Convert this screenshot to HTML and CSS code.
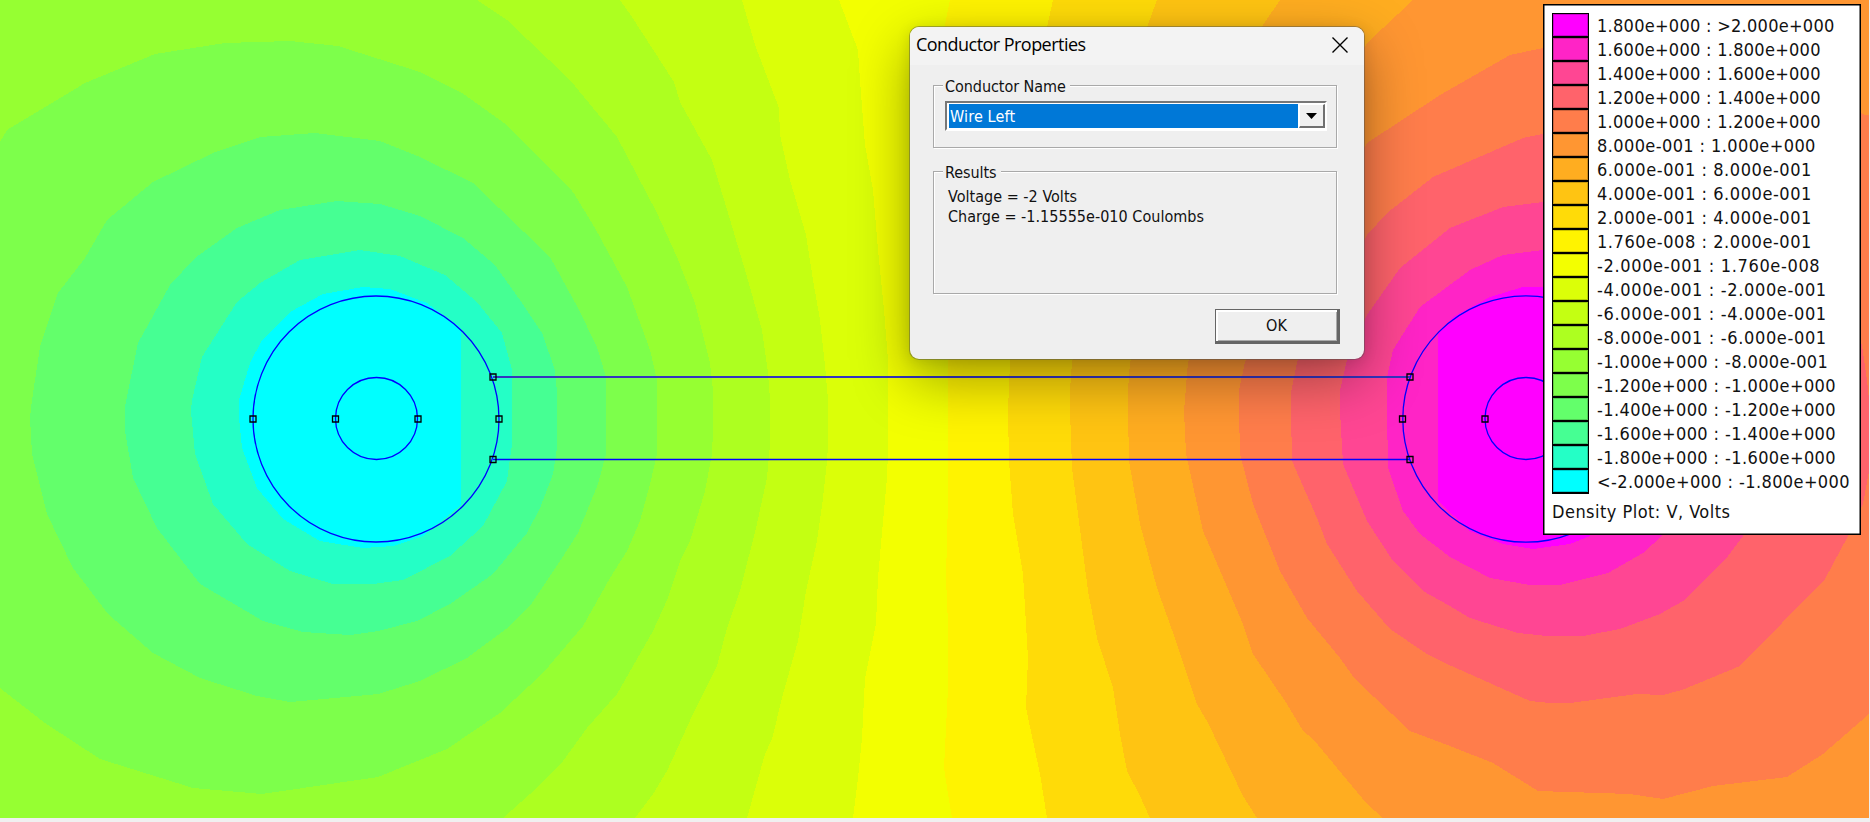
FILE: index.html
```html
<!DOCTYPE html>
<html lang="en">
<head>
<meta charset="utf-8">
<title>Conductor Properties</title>
<link rel="stylesheet" href="styles.css">
</head>
<body>
<main class="viewport">
  <svg class="plot" width="1869" height="818" viewBox="0 0 1869 818" aria-label="Density plot">
    <rect class="c10" width="1869" height="818"/>
    <!-- negative potentials, outermost band first -->
    <path class="c11" d="M0 0H839L858 50 860 80 865 145 873 190 878 250 884 310 888 360V450L887 478 883 521 878 578 876 624 865 678 862 738 858 778 853 818H0Z"/>
    <path class="c12" d="M0 0H742L755 45 779 108 780 135 790 180 806 235 813 280 820 320 825 365 828 400V445L827 461 823 498 817 541 806 591 798 641 783 694 772 739 765 754 747 818H0Z"/>
    <path class="c13" d="M0 0H620L632 17 674 82 680 102 712 160 728 213 745 270 762 330 768 373 770 400V444L767 478 756 528 740 591 727 628 717 666 693 714 667 771 653 794 635 818H0Z"/>
    <path class="c14" d="M0 0H477L507 20 570 80 617 137 657 213 677 257 695 303 710 363 713 390V430L712 454 705 491 690 541 680 561 668 598 653 631 633 666 617 694 587 728 563 761 530 794 503 818H0Z"/>
    <path class="c15" d="M0 142L7 130 85 83 155 54 225 43 290 41 338 46 420 72 462 93 507 125 573 192 595 228 627 287 650 350 657 380V454L650 484 640 521 627 551 610 578 583 626 543 673 500 713 447 749 378 777 262 794 193 788 100 759 45 723 0 688Z"/>
    <path class="c16" d="M315 133L380 141 420 157 473 183 550 257 578 308 597 347 606 377V454L598 484 578 533 560 561 532 603 510 626 467 658 420 681 378 694 290 702 257 696 200 678 153 653 108 614 73 568 47 514 32 454 30 418 32 400 40 347 58 293 85 258 107 220 153 182 213 153 260 137Z"/>
    <path class="c17" d="M337 201L380 204 420 216 463 238 495 265 522 303 542 333 555 370 557 393V448L553 474 540 508 527 533 493 574 450 604 417 621 378 631 350 635 303 632 263 621 200 584 157 528 133 478 125 431V406L138 343 170 285 195 258 237 228 280 210Z"/>
    <path class="c18" d="M360 250L400 256 445 275 477 302 502 333 512 370V444L507 481 483 526 450 556 403 580 373 584H333L290 571 247 544 213 504 195 454 191 411 192 400 202 357 237 302 260 283 300 260Z"/>
    <path class="c19" d="M239 400L250 363 262 340 290 312 323 294 363 287 390 289 427 303 461 328V505L423 536 393 546 363 548 320 541 283 519 257 488 242 448 239 418Z"/>
    <!-- positive potentials, outermost band first -->
    <path class="c9" d="M950 0L945 25 948 362V500L946 578 948 624V688L944 768 948 794 952 818H1869V0Z"/>
    <path class="c8" d="M1053 0L1047 27 1010 362 1008 411 1009 461 1013 514 1023 574 1028 658 1026 708 1040 774 1047 818H1869V0Z"/>
    <path class="c7" d="M1157 0L1147 27 1072 362 1070 390V411L1072 468 1088 591 1097 638 1113 688 1120 734 1127 771 1140 796 1150 818H1869V0Z"/>
    <path class="c6" d="M1280 0L1263 25 1130 362 1128 390V411L1129 461 1140 524 1157 588 1177 644 1197 704 1208 723 1243 796 1257 818H1869V0Z"/>
    <path class="c5" d="M1413 0L1367 43 1188 362 1184 411 1186 454 1203 531 1243 624 1253 654 1287 704 1303 731 1313 739 1367 804 1383 818H1869V0Z"/>
    <path class="c4" d="M1543 48L1510 55 1440 95 1367 143 1245 362 1239 390V411L1240 454 1253 504 1280 571 1307 618 1340 658 1355 679 1410 731 1450 746 1493 763 1538 791 1630 794 1663 799 1713 786 1787 777 1823 754 1869 714V115H1865L1740 60Z"/>
    <path class="c3" d="M1543 134L1523 138 1433 177 1387 213 1367 235 1297 362 1291 393V411L1292 461 1317 518 1327 544 1357 591 1390 629 1427 654 1447 664 1530 701 1550 703H1570L1637 694 1663 695 1682 690 1740 666 1825 579 1848 536 1863 504 1869 471V400L1867 380 1862 345 1780 190Z"/>
    <path class="c2" d="M1543 202L1503 207 1450 228 1400 268 1367 315 1347 360 1340 390V411L1343 464 1367 521 1393 561 1423 591 1450 606 1470 618 1518 633 1547 636H1583L1620 629 1660 614 1683 601 1728 556 1743 536V300Z"/>
    <path class="c1" d="M1543 250L1503 255 1470 270 1420 307 1393 350 1387 377V411L1388 468 1403 511 1420 534 1450 557 1490 578 1530 585H1560L1608 573 1643 553 1662 536V300Z"/>
    <path class="c0" d="M1543 287H1523L1490 297 1453 317 1438 333V501L1470 531 1503 544 1533 549 1570 544 1590 536V300Z"/>
    <g class="wires">
      <circle cx="376" cy="419" r="123"/>
      <circle cx="376.500" cy="418.500" r="41"/>
      <circle cx="1526" cy="419" r="123.200"/>
      <circle cx="1526" cy="418.500" r="41"/>
      <path class="wire-top" d="M493 377H1410"/>
      <path d="M493 459.500H1410"/>
    </g>
    <g class="nodes">
      <path d="M250 416h6v6h-6zM332.500 416h6v6h-6zM415 416h6v6h-6zM496 416h6v6h-6zM490 374h6v6h-6zM490 456.500h6v6h-6z"/>
      <path d="M1399.500 416h6v6h-6zM1482 416h6v6h-6zM1407 374h6v6h-6zM1407 456.500h6v6h-6z"/>
    </g>
  </svg>

  <section class="legend">
    <ul class="scale">
      <li><i class="b0"></i><span>1.800e+000 : &gt;2.000e+000</span></li>
      <li><i class="b1"></i><span>1.600e+000 : 1.800e+000</span></li>
      <li><i class="b2"></i><span>1.400e+000 : 1.600e+000</span></li>
      <li><i class="b3"></i><span>1.200e+000 : 1.400e+000</span></li>
      <li><i class="b4"></i><span>1.000e+000 : 1.200e+000</span></li>
      <li><i class="b5"></i><span class="wide">8.000e-001 : 1.000e+000</span></li>
      <li><i class="b6"></i><span class="wider">6.000e-001 : 8.000e-001</span></li>
      <li><i class="b7"></i><span class="wider">4.000e-001 : 6.000e-001</span></li>
      <li><i class="b8"></i><span class="wider">2.000e-001 : 4.000e-001</span></li>
      <li><i class="b9"></i><span class="wider">1.760e-008 : 2.000e-001</span></li>
      <li><i class="b10"></i><span class="widest">-2.000e-001 : 1.760e-008</span></li>
      <li><i class="b11"></i><span class="widest">-4.000e-001 : -2.000e-001</span></li>
      <li><i class="b12"></i><span class="widest">-6.000e-001 : -4.000e-001</span></li>
      <li><i class="b13"></i><span class="widest">-8.000e-001 : -6.000e-001</span></li>
      <li><i class="b14"></i><span class="wide">-1.000e+000 : -8.000e-001</span></li>
      <li><i class="b15"></i><span class="wide">-1.200e+000 : -1.000e+000</span></li>
      <li><i class="b16"></i><span class="wide">-1.400e+000 : -1.200e+000</span></li>
      <li><i class="b17"></i><span class="wide">-1.600e+000 : -1.400e+000</span></li>
      <li><i class="b18"></i><span class="wide">-1.800e+000 : -1.600e+000</span></li>
      <li><i class="b19"></i><span class="wide">&lt;-2.000e+000 : -1.800e+000</span></li>
    </ul>
    <p class="caption">Density Plot: V, Volts</p>
  </section>

  <section class="dialog">
    <header class="titlebar">
      <h1>Conductor Properties</h1>
      <svg class="close" width="16" height="16" viewBox="0 0 16 16"><path d="M.5.500l15 15M15.500.500l-15 15"/></svg>
    </header>
    <div class="content">
      <div class="group name">
        <h2>Conductor Name</h2>
        <div class="combo">
          <span class="value">Wire Left</span>
          <span class="arrow"><svg width="11" height="6" viewBox="0 0 11 6"><path d="M0 0h11l-5.500 6z"/></svg></span>
        </div>
      </div>
      <div class="group results">
        <h2>Results</h2>
        <p>Voltage = -2 Volts</p>
        <p class="charge">Charge = -1.15555e-010 Coulombs</p>
      </div>
      <button class="ok">OK</button>
    </div>
  </section>
</main>
</body>
</html>
```
FILE: styles.css
```css
* { box-sizing: border-box; }
body { margin: 0; background: #f0f0f0; overflow: hidden; }
h1, h2, p, ul { margin: 0; padding: 0; font-weight: normal; }
.viewport { position: relative; width: 1870px; height: 822px; font-family: "DejaVu Sans Condensed", "DejaVu Sans", sans-serif; font-stretch: condensed; color: #111; }
.plot { display: block; shape-rendering: crispEdges; }

/* density colours */
.c0 { fill: #ff00ff; } .b0 { background: #ff00ff; }
.c1 { fill: #ff24c6; } .b1 { background: #ff24c6; }
.c2 { fill: #ff4693; } .b2 { background: #ff4693; }
.c3 { fill: #ff636b; } .b3 { background: #ff636b; }
.c4 { fill: #ff7d4b; } .b4 { background: #ff7d4b; }
.c5 { fill: #ff9632; } .b5 { background: #ff9632; }
.c6 { fill: #ffad20; } .b6 { background: #ffad20; }
.c7 { fill: #ffc412; } .b7 { background: #ffc412; }
.c8 { fill: #ffdb08; } .b8 { background: #ffdb08; }
.c9 { fill: #fff300; } .b9 { background: #fff300; }
.c10 { fill: #f3ff00; } .b10 { background: #f3ff00; }
.c11 { fill: #dbff08; } .b11 { background: #dbff08; }
.c12 { fill: #c4ff12; } .b12 { background: #c4ff12; }
.c13 { fill: #adff20; } .b13 { background: #adff20; }
.c14 { fill: #96ff32; } .b14 { background: #96ff32; }
.c15 { fill: #7dff4b; } .b15 { background: #7dff4b; }
.c16 { fill: #63ff6b; } .b16 { background: #63ff6b; }
.c17 { fill: #46ff93; } .b17 { background: #46ff93; }
.c18 { fill: #24ffc6; } .b18 { background: #24ffc6; }
.c19 { fill: #00ffff; } .b19 { background: #00ffff; }

.wires { fill: none; stroke: #0000ff; stroke-width: 1.3; shape-rendering: auto; }
.wire-top { stroke: #3434c0; stroke-width: 2; }
.nodes { fill: none; stroke: #000; stroke-width: 1.3; shape-rendering: auto; }

.legend { position: absolute; left: 1543px; top: 4px; width: 318px; height: 531px; padding: 8px 0 0 8px; background: #fff; border: 1px solid #000; box-shadow: inset 0 0 0 .5px #000; font-size: 18px; }
.scale { list-style: none; }
.scale li { display: flex; align-items: stretch; gap: 8px; height: 24.030px; line-height: 24px; white-space: nowrap; }
.scale i { width: 37px; border: 1px solid #000; box-shadow: 0 1px 0 #000, inset 0 0 0 1px rgba(0,0,0,.2); }
.scale span { padding-top: 1px; letter-spacing: .28px; }
.scale .wide { letter-spacing: .4px; }
.scale .wider { letter-spacing: .57px; }
.scale .widest { letter-spacing: .65px; }
.caption { margin-top: 8px; line-height: 22px; letter-spacing: .47px; }

.dialog { position: absolute; left: 909px; top: 26px; width: 456px; height: 334px; border: 1px solid rgba(80,80,80,.45); border-radius: 10px; background: #efefef; background-clip: padding-box; box-shadow: 0 20px 56px rgba(0,0,0,.36), 0 2px 14px rgba(0,0,0,.1); font-size: 16px; }
.titlebar { display: flex; justify-content: space-between; align-items: center; height: 38px; padding: 0 16px 0 6px; background: #f3f3f3; border-radius: 9px 9px 0 0; }
.titlebar h1 { font: 18px "Open Sans", sans-serif; color: #000; line-height: 34px; letter-spacing: -.54px; margin-top: -5px; }
.close { fill: none; stroke: #000; stroke-width: 1.4; margin-top: -3px; }
.content { display: flex; flex-direction: column; padding: 20px 27px 0 23px; }
.group { border: 1px solid #a9a9a9; box-shadow: 1px 1px 0 #fff, inset 1px 1px 0 #fff; padding: 0 11px; }
.group h2 { width: max-content; margin-top: -9px; padding: 0 4px 0 2px; margin-left: -2px; background: #efefef; font-size: 16px; line-height: 20px; letter-spacing: -.05px; }
.group p { line-height: 20px; padding-left: 3px; letter-spacing: .03px; }
.name { height: 63px; }
.combo { display: flex; align-items: stretch; width: 382px; height: 30px; margin-top: 4px; padding: 1px; background: #fff; border: 2px solid #777; border-right-color: #fff; border-bottom-color: #fff; }
.value { flex: 1; margin: 0 1px 0 1px; padding-left: 1px; background: #0078d7; color: #fff; line-height: 25px; letter-spacing: .15px; }
.arrow { display: flex; align-items: center; justify-content: center; width: 26px; margin-right: -1px; background: #f0f0f0; border: 1px solid #fff; border-right: 2px solid #707070; border-bottom: 2px solid #707070; }
.results { height: 123px; margin-top: 23px; }
.results p:first-of-type { margin-top: 4px; }
.ok { align-self: flex-end; width: 125px; height: 35px; margin: 15px -3px 0 0; padding: 0; background: #efefef; border: 1px solid #666; border-width: 1px 3px 3px 1px; box-shadow: inset 1px 1px 0 1px #fff, inset -1px -1px 0 #aaa; font: inherit; color: #111; }
```
